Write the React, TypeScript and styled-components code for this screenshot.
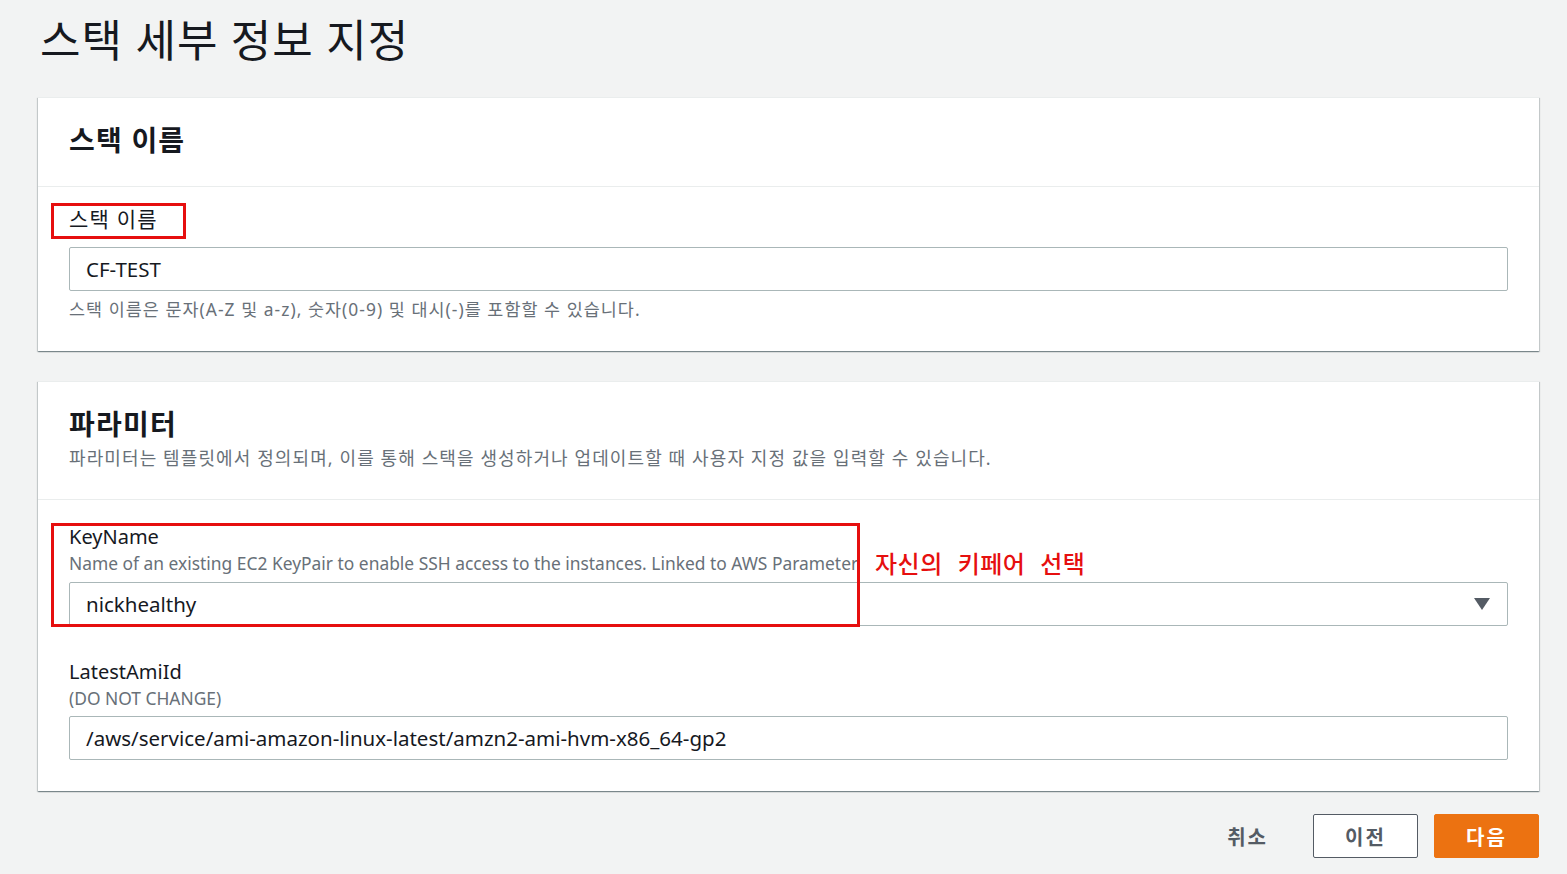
import * as React from 'react';
import styled, { createGlobalStyle } from 'styled-components';

const fontStack = `"Noto Sans", "Noto Sans CJK KR", sans-serif`;
const colorText = '#16191f';
const colorMuted = '#687078';
const colorBorder = '#aab7b8';
const colorAnnotate = '#e60f0f';

const GlobalStyle = createGlobalStyle`
    html, body {
        margin: 0;
        padding: 0;
        background: #f2f3f3;
        font-family: ${fontStack};
        color: ${colorText};
    }
`;

const Page = styled.div`
    width: 1501px;
    padding: 0 0 0 38px;
`;

const PageTitle = styled.h1`
    margin: 12px 0 29px 2px;
    font-size: 44px;
    line-height: 56px;
    font-weight: 400;
    letter-spacing: 1px;
`;

const Card = styled.section<{ gap?: number }>`
    background: #fff;
    margin-bottom: ${(p) => p.gap ?? 0}px;
    border-top: 1px solid #eaeded;
    box-shadow: 0 1px 1px 0 rgba(0, 28, 36, 0.3),
        1px 1px 1px 0 rgba(0, 28, 36, 0.15),
        -1px 1px 1px 0 rgba(0, 28, 36, 0.15);
`;

const CardHeader = styled.div`
    padding: 24px 31px 28px;
    border-bottom: 1px solid #eaeded;
`;

const CardTitle = styled.h2`
    margin: 0;
    font-size: 28px;
    line-height: 36px;
    font-weight: 700;
    letter-spacing: 1.2px;
`;

const CardDesc = styled.p`
    margin: 3px 0 0;
    font-size: 18px;
    line-height: 26px;
    letter-spacing: 1.1px;
    color: ${colorMuted};
`;

const CardBody = styled.div<{ top: number; bottom: number }>`
    padding: ${(p) => p.top}px 31px ${(p) => p.bottom}px;
`;

const Field = styled.div<{ gap?: number }>`
    position: relative;
    margin-top: ${(p) => p.gap ?? 0}px;
`;

const Label = styled.div`
    position: relative;
    font-size: 20px;
    line-height: 26px;
`;

const KoLabel = styled(Label)`
    font-size: 21px;
    line-height: 30px;
    letter-spacing: 1.2px;
    margin-bottom: 13px;
`;

const Hint = styled.div<{ gap?: number; ko?: boolean }>`
    font-size: 17.4px;
    line-height: 26px;
    letter-spacing: ${(p) => (p.ko ? 1.05 : 0)}px;
    color: ${colorMuted};
    margin-top: ${(p) => p.gap ?? 0}px;
    white-space: nowrap;
`;

const TextBox = styled.div<{ gap?: number }>`
    display: flex;
    align-items: center;
    justify-content: space-between;
    height: 44px;
    box-sizing: border-box;
    margin-top: ${(p) => p.gap ?? 0}px;
    padding: 0 17px 0 16px;
    border: 1px solid ${colorBorder};
    border-radius: 2px;
    background: #fff;
    font-size: 20.5px;
    color: ${colorText};
`;

const Caret = styled.span`
    width: 0;
    height: 0;
    border-left: 8px solid transparent;
    border-right: 8px solid transparent;
    border-top: 12px solid #545b64;
`;

const RedBox = styled.div<{ w: number; h: number }>`
    position: absolute;
    left: -18px;
    top: -1px;
    width: ${(p) => p.w}px;
    height: ${(p) => p.h}px;
    box-sizing: border-box;
    border: 3px solid ${colorAnnotate};
    pointer-events: none;
`;

const Annotation = styled.div`
    position: absolute;
    left: 806px;
    top: 24px;
    font-size: 24px;
    line-height: 30px;
    font-weight: 500;
    letter-spacing: 0.5px;
    word-spacing: 9px;
    color: ${colorAnnotate};
    font-family: "Noto Sans CJK KR", sans-serif;
    white-space: nowrap;
`;

const Footer = styled.div`
    display: flex;
    justify-content: flex-end;
    align-items: center;
    gap: 16px;
    margin-top: 23px;
`;

const Button = styled.button<{ variant: 'link' | 'normal' | 'primary' }>`
    height: 44px;
    min-width: ${(p) => (p.variant === 'link' ? 0 : 105)}px;
    padding: 0 20px;
    margin-right: ${(p) => (p.variant === 'link' ? 8 : 0)}px;
    box-sizing: border-box;
    font-family: ${fontStack};
    font-size: 20px;
    font-weight: 700;
    letter-spacing: 2px;
    border-radius: 2px;
    cursor: pointer;
    color: ${(p) => (p.variant === 'primary' ? '#fff' : '#545b64')};
    background: ${(p) => (p.variant === 'primary' ? '#ec7211' : p.variant === 'normal' ? '#fff' : 'transparent')};
    border: 1px solid ${(p) => (p.variant === 'primary' ? '#ec7211' : p.variant === 'normal' ? '#545b64' : 'transparent')};
`;

export default function App() {
    return (
        <Page>
            <GlobalStyle />
            <PageTitle>스택 세부 정보 지정</PageTitle>

            <Card gap={30}>
                <CardHeader>
                    <CardTitle>스택 이름</CardTitle>
                </CardHeader>
                <CardBody top={17} bottom={29}>
                    <KoLabel>
                        스택 이름
                        <RedBox w={135} h={36} />
                    </KoLabel>
                    <TextBox>CF-TEST</TextBox>
                    <Hint gap={5} ko>스택 이름은 문자(A-Z 및 a-z), 숫자(0-9) 및 대시(-)를 포함할 수 있습니다.</Hint>
                </CardBody>
            </Card>

            <Card>
                <CardHeader>
                    <CardTitle>파라미터</CardTitle>
                    <CardDesc>
                        파라미터는 템플릿에서 정의되며, 이를 통해 스택을 생성하거나 업데이트할 때 사용자 지정 값을 입력할 수 있습니다.
                    </CardDesc>
                </CardHeader>
                <CardBody top={24} bottom={31}>
                    <Field>
                        <Label>KeyName</Label>
                        <Hint>Name of an existing EC2 KeyPair to enable SSH access to the instances. Linked to AWS Parameter</Hint>
                        <TextBox gap={6}>
                            <span>nickhealthy</span>
                            <Caret />
                        </TextBox>
                        <RedBox w={809} h={104} />
                        <Annotation>자신의 키페어 선택</Annotation>
                    </Field>
                    <Field gap={33}>
                        <Label>LatestAmiId</Label>
                        <Hint>(DO NOT CHANGE)</Hint>
                        <TextBox gap={5}>/aws/service/ami-amazon-linux-latest/amzn2-ami-hvm-x86_64-gp2</TextBox>
                    </Field>
                </CardBody>
            </Card>

            <Footer>
                <Button variant="link">취소</Button>
                <Button variant="normal">이전</Button>
                <Button variant="primary">다음</Button>
            </Footer>
        </Page>
    );
}
